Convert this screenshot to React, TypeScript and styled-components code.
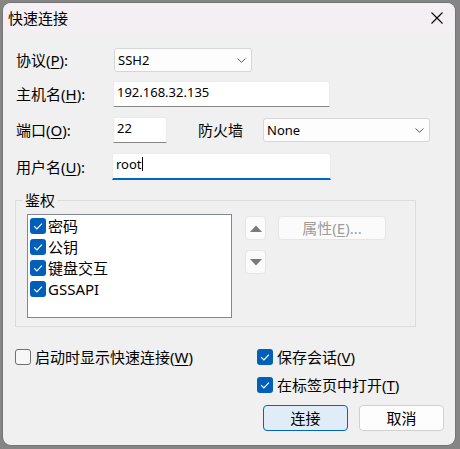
import React from "react";
import styled, { createGlobalStyle } from "styled-components";

const GlobalStyle = createGlobalStyle`
  html, body { margin: 0; padding: 0; background: #858585; }
  body {
    width: 460px; height: 449px; overflow: hidden;
    font-family: "Noto Sans", "Noto Sans CJK SC", sans-serif;
    color: #000;
  }
  * { box-sizing: border-box; }
`;

const Screen = styled.div`
  width: 460px;
  height: 449px;
  padding: 3px 5px 4px 3px;
  background: #858585;
`;

const Window = styled.div`
  width: 452px;
  height: 442px;
  border-radius: 8px;
  overflow: hidden;
  background: #f0f0f0;
  display: flex;
  flex-direction: column;
  box-shadow: 0 0 0 1px rgba(0, 0, 0, 0.12);
`;

const TitleBar = styled.div`
  height: 30px;
  flex: none;
  background: #f4eff2;
  display: flex;
  align-items: center;
  justify-content: space-between;
  padding: 0 12px 0 5px;
  font-family: "Noto Sans CJK SC", sans-serif;
  font-size: 15px;
  line-height: 20px;
`;

const CloseIcon = styled.svg`
  width: 12px;
  height: 12px;
  display: block;
`;

const Body = styled.div`
  flex: 1;
  padding: 15px 11px 0 12px;
  display: flex;
  flex-direction: column;
`;

const FormRow = styled.div<{ $mt: number; $h: number }>`
  display: flex;
  align-items: center;
  height: ${(p) => p.$h}px;
  margin-top: ${(p) => p.$mt}px;
`;

const Label = styled.label<{ $w: number; $ml?: number }>`
  width: ${(p) => p.$w}px;
  margin-left: ${(p) => p.$ml ?? 1}px;
  flex: none;
  font-size: 15px;
  line-height: 20px;
  white-space: nowrap;
`;

const U = styled.span`
  text-decoration: underline;
  text-underline-offset: 2px;
  text-decoration-thickness: 1px;
`;

const Select = styled.div<{ $w: number; $ml?: number }>`
  width: ${(p) => p.$w}px;
  margin-left: ${(p) => p.$ml ?? 0}px;
  height: 24px;
  flex: none;
  background: #fdfdfd;
  border: 1px solid #d6d6d6;
  border-radius: 3px;
  display: flex;
  align-items: center;
  justify-content: space-between;
  padding: 0 5px 0 3px;
  font-family: "Noto Sans", sans-serif;
  font-size: 13px;
  line-height: 18px;
`;

const Chevron = styled.svg`
  width: 9px;
  height: 5px;
  display: block;
`;

const TextBox = styled.div<{ $w: number; $h: number; $ml?: number; $focused?: boolean }>`
  width: ${(p) => p.$w}px;
  height: ${(p) => p.$h}px;
  margin-left: ${(p) => p.$ml ?? 0}px;
  flex: none;
  background: #fff;
  border: 1px solid #ebebeb;
  border-bottom: ${(p) => (p.$focused ? "2px solid #0067c0" : "1px solid #868686")};
  border-radius: 3px 3px 0 0;
  padding: 1px 3px 0 3px;
  font-family: "Noto Sans", sans-serif;
  font-size: 13px;
  line-height: 18px;
  display: flex;
  align-items: flex-start;
`;

const Caret = styled.span`
  display: inline-block;
  width: 1px;
  height: 14px;
  margin-top: 2px;
  background: #000;
`;

const Group = styled.fieldset`
  margin: 10px 0 0 0;
  width: 401px;
  min-width: 0;
  border: 1px solid #dcdcdc;
  padding: 4px 11px 8px 11px;
`;

const Legend = styled.legend`
  margin-left: -4px;
  padding: 0 2px;
  font-size: 15px;
  line-height: 20px;
`;

const GroupInner = styled.div`
  display: flex;
  align-items: flex-start;
`;

const ListBox = styled.div`
  width: 205px;
  height: 104px;
  flex: none;
  background: #fff;
  border: 1px solid #828790;
  padding: 0 0 0 2px;
  display: flex;
  flex-direction: column;
`;

const ListItem = styled.div`
  height: 21px;
  display: flex;
  align-items: center;
  gap: 2px;
  font-size: 15px;
  line-height: 20px;
`;

const Box = styled.span<{ $checked: boolean }>`
  width: 16px;
  height: 16px;
  flex: none;
  border-radius: 3px;
  display: flex;
  align-items: center;
  justify-content: center;
  background: ${(p) => (p.$checked ? "#005fb8" : "#f7f7f7")};
  border: ${(p) => (p.$checked ? "none" : "1px solid #707070")};
`;

const CheckMark = styled.svg`
  width: 16px;
  height: 16px;
  display: block;
`;

const ArrowCol = styled.div`
  margin: 2px 0 0 13px;
  display: flex;
  flex-direction: column;
  gap: 10px;
`;

const SmallButton = styled.div`
  width: 21px;
  height: 24px;
  background: #fbfbfb;
  border: 1px solid #e5e5e5;
  border-radius: 4px;
  display: flex;
  align-items: center;
  justify-content: center;
`;

const Triangle = styled.svg`
  width: 12px;
  height: 7px;
  display: block;
`;

const PropButton = styled.div`
  margin: 2px 0 0 12px;
  width: 108px;
  height: 24px;
  background: #fbfbfb;
  border: 1px solid #e5e5e5;
  border-radius: 4px;
  display: flex;
  align-items: center;
  justify-content: center;
  font-size: 15px;
  line-height: 20px;
  color: #9d9d9d;
`;

const OptionsGrid = styled.div`
  display: grid;
  grid-template-columns: 242px 1fr;
  row-gap: 12px;
  margin-top: 22px;
`;

const CheckOption = styled.div<{ $col: number }>`
  grid-column: ${(p) => p.$col};
  height: 16px;
  display: flex;
  align-items: center;
  gap: 4px;
  font-size: 15px;
  line-height: 16px;
  white-space: nowrap;
`;

const ButtonRow = styled.div`
  margin-top: 12px;
  display: flex;
  justify-content: flex-end;
  gap: 11px;
`;

const DialogButton = styled.div<{ $primary?: boolean }>`
  width: 85px;
  height: 26px;
  border-radius: 4px;
  border: 1px solid ${(p) => (p.$primary ? "#0067c0" : "#d0d0d0")};
  background: ${(p) => (p.$primary ? "#e0ecf8" : "#fdfdfd")};
  display: flex;
  align-items: center;
  justify-content: center;
  font-size: 15px;
  line-height: 20px;
`;

const Check = ({ checked }: { checked: boolean }) => (
  <Box $checked={checked}>
    {checked && (
      <CheckMark viewBox="0 0 16 16">
        <path d="M4.2 8.3 L6.9 10.9 L11.9 5.6" fill="none" stroke="#fff" strokeWidth="1.2" />
      </CheckMark>
    )}
  </Box>
);

const ChevronDown = () => (
  <Chevron viewBox="0 0 9 5">
    <path d="M0.5 0.5 L4.5 4.3 L8.5 0.5" fill="none" stroke="#5a5a5a" strokeWidth="1" />
  </Chevron>
);

const authItems = ["密码", "公钥", "键盘交互", "GSSAPI"];

export default function App() {
  return (
    <>
      <GlobalStyle />
      <Screen>
        <Window>
          <TitleBar>
            <span>快速连接</span>
            <CloseIcon viewBox="0 0 12 12">
              <path d="M0.5 0.5 L11.5 11.5 M11.5 0.5 L0.5 11.5" stroke="#000" strokeWidth="1.1" />
            </CloseIcon>
          </TitleBar>
          <Body>
            <FormRow $mt={0} $h={24}>
              <Label $w={97}>
                协议(<U>P</U>):
              </Label>
              <Select $w={138} $ml={1}>
                <span>SSH2</span>
                <ChevronDown />
              </Select>
            </FormRow>
            <FormRow $mt={9} $h={26}>
              <Label $w={97}>
                主机名(<U>H</U>):
              </Label>
              <TextBox $w={217} $h={26}>
                192.168.32.135
              </TextBox>
            </FormRow>
            <FormRow $mt={10} $h={26}>
              <Label $w={97}>
                端口(<U>O</U>):
              </Label>
              <TextBox $w={54} $h={26}>
                22
              </TextBox>
              <Label $w={65} $ml={31}>
                防火墙
              </Label>
              <Select $w={167}>
                <span>None</span>
                <ChevronDown />
              </Select>
            </FormRow>
            <FormRow $mt={10} $h={27}>
              <Label $w={96}>
                用户名(<U>U</U>):
              </Label>
              <TextBox $w={219} $h={27} $focused>
                root
                <Caret />
              </TextBox>
            </FormRow>

            <Group>
              <Legend>鉴权</Legend>
              <GroupInner>
                <ListBox>
                  {authItems.map((item) => (
                    <ListItem key={item}>
                      <Check checked />
                      <span>{item}</span>
                    </ListItem>
                  ))}
                </ListBox>
                <ArrowCol>
                  <SmallButton>
                    <Triangle viewBox="0 0 12 7">
                      <path d="M0 7 L6 0.5 L12 7 Z" fill="#7a7a7a" />
                    </Triangle>
                  </SmallButton>
                  <SmallButton>
                    <Triangle viewBox="0 0 12 7">
                      <path d="M0 0 L6 6.5 L12 0 Z" fill="#7a7a7a" />
                    </Triangle>
                  </SmallButton>
                </ArrowCol>
                <PropButton>
                  属性(<U>E</U>)...
                </PropButton>
              </GroupInner>
            </Group>

            <OptionsGrid>
              <CheckOption $col={1}>
                <Check checked={false} />
                <span>
                  启动时显示快速连接(<U>W</U>)
                </span>
              </CheckOption>
              <CheckOption $col={2}>
                <Check checked />
                <span>
                  保存会话(<U>V</U>)
                </span>
              </CheckOption>
              <CheckOption $col={2}>
                <Check checked />
                <span>
                  在标签页中打开(<U>T</U>)
                </span>
              </CheckOption>
            </OptionsGrid>

            <ButtonRow>
              <DialogButton $primary>连接</DialogButton>
              <DialogButton>取消</DialogButton>
            </ButtonRow>
          </Body>
        </Window>
      </Screen>
    </>
  );
}
